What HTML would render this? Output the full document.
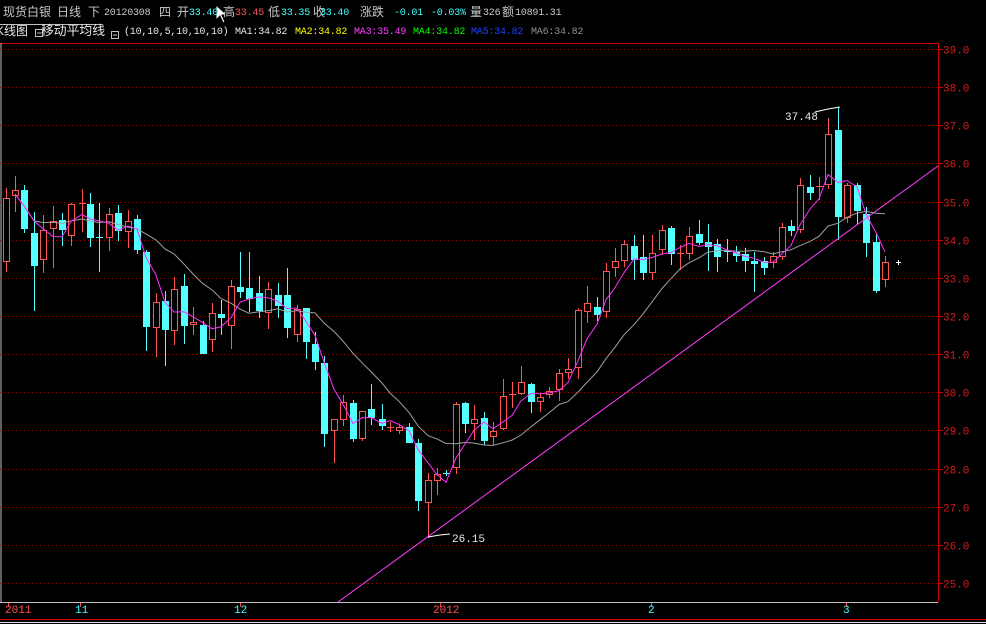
<!DOCTYPE html>
<html><head><meta charset="utf-8"><style>
body{margin:0;background:#000;width:986px;height:624px;overflow:hidden;position:relative;font-family:"Liberation Mono","Noto Sans CJK SC",monospace}
.t{position:absolute;font-size:12px;line-height:14px;white-space:nowrap;color:#c8c8c8;font-family:"Liberation Sans","Noto Sans CJK SC",sans-serif}
.m{font-family:"Liberation Mono",monospace;font-size:10px;letter-spacing:-0.2px;top:7px}
.m2{font-family:"Liberation Mono",monospace;font-size:10px;letter-spacing:-0.2px;top:26px}
.c{color:#40ffff}.r{color:#ff5050}.y{color:#ffff00}.p{color:#ff40ff}.g{color:#00ff00}.b{color:#2040ff}.gr{color:#909090}.w{color:#e8e8e8}
</style></head><body>
<svg id="s" width="986" height="624" style="position:absolute;left:0;top:0" xmlns="http://www.w3.org/2000/svg"></svg>
<div class="t" style="left:3px;top:5px">现货白银</div>
<div class="t" style="left:57px;top:5px">日线</div>
<div class="t" style="left:88px;top:5px">下</div>
<div class="t m" style="left:104px">20120308</div>
<div class="t" style="left:159px;top:5px">四</div>
<div class="t" style="left:177px;top:5px">开</div>
<div class="t m c" style="left:189px">33.40</div>
<div class="t" style="left:223px;top:5px">高</div>
<div class="t m r" style="left:235px">33.45</div>
<div class="t" style="left:268px;top:5px">低</div>
<div class="t m c" style="left:281px">33.35</div>
<div class="t" style="left:313px;top:5px">收</div>
<div class="t m c" style="left:320px">33.40</div>
<div class="t" style="left:360px;top:5px">涨跌</div>
<div class="t m c" style="left:394px">-0.01</div>
<div class="t m c" style="left:431px">-0.03%</div>
<div class="t" style="left:470px;top:5px">量</div>
<div class="t m" style="left:483px">326</div>
<div class="t" style="left:502px;top:5px">额</div>
<div class="t m" style="left:515px">10891.31</div>
<div class="t w" style="left:-4px;top:24px">K线图</div>
<div class="t w" style="left:41px;top:24px;font-size:12.8px">移动平均线</div>
<div class="t m2 w" style="left:124px">(10,10,5,10,10,10)</div>
<div class="t m2 w" style="left:235px">MA1:34.82</div>
<div class="t m2 y" style="left:295px">MA2:34.82</div>
<div class="t m2 p" style="left:354px">MA3:35.49</div>
<div class="t m2 g" style="left:413px">MA4:34.82</div>
<div class="t m2 b" style="left:471px">MA5:34.82</div>
<div class="t m2 gr" style="left:531px">MA6:34.82</div>
<div class="t w" style="left:785px;top:111px;font-family:'Liberation Mono';font-size:11px">37.48</div>
<div class="t w" style="left:452px;top:533px;font-family:'Liberation Mono';font-size:11px">26.15</div>
<div class="t r" style="left:5px;top:604px;font-family:'Liberation Mono';font-size:11px">2011</div>
<div class="t c" style="left:75px;top:604px;font-family:'Liberation Mono';font-size:11px">11</div>
<div class="t c" style="left:234px;top:604px;font-family:'Liberation Mono';font-size:11px">12</div>
<div class="t r" style="left:433px;top:604px;font-family:'Liberation Mono';font-size:11px">2012</div>
<div class="t c" style="left:648px;top:604px;font-family:'Liberation Mono';font-size:11px">2</div>
<div class="t c" style="left:843px;top:604px;font-family:'Liberation Mono';font-size:11px">3</div>
<script>
var s=document.getElementById('s'),h='';
function L(x1,y1,x2,y2,c,e){h+='<line x1="'+x1+'" y1="'+y1+'" x2="'+x2+'" y2="'+y2+'" stroke="'+c+'" '+(e||'')+'/>';}
L(0,43.5,938,43.5,'#d00000');L(938.5,43,938.5,602,'#d00000');L(1,43,1,602,'#c0c0c0');L(0,602.5,938,602.5,'#c0c0c0');
L(0,619.5,986,619.5,'#e00000');L(0,622.5,986,622.5,'#e0e0e0');
L(0,24.5,102,24.5,'#c0c0c0');
for(var k=0;k<=14;k++){var y=Math.round(49+k*38.14)+.5;L(0,y,937,y,'#a00000','stroke-dasharray="1 3"');L(938,y,943,y,'#d00000');
h+='<text x="943" y="'+(y+4)+'" fill="#d02020" font-family="Liberation Mono" font-size="11">'+(39-k).toFixed(1)+'</text>';}
[8,80,240,440,651,846].forEach(function(a){L(a+.5,603,a+.5,607,'#f04050');});
function B(x,y){h+='<rect x="'+x+'.5" y="'+y+'.5" width="7" height="7" fill="none" stroke="#c0c0c0"/>';L(x+2,y+4,x+6,y+4,'#c0c0c0');}
B(35,29);B(111,31);
var d=[[6,'U',198,262,188,272],[15,'U',190,196,176,212],[24,'D',190,229,185,233],[34,'D',233,266,212,311],[43,'U',230,260,215,273],[53,'U',221,229,206,268],[62,'D',220,230,213,246],[71,'U',204,236,203,246],[82,'U',203,204,189,232],[90,'D',204,238,193,247],[99,'D',237,238,203,272],[109,'U',214,238,208,251],[118,'D',213,231,205,241],[128,'U',221,232,210,248],[137,'D',219,250,215,254],[146,'D',252,327,250,351],[156,'U',302,328,293,357],[165,'D',301,330,291,366],[174,'U',289,331,277,345],[184,'D',286,326,274,344],[193,'U',322,325,307,335],[203,'D',325,354,321,354],[212,'U',313,340,303,352],[221,'D',314,318,300,335],[231,'U',286,326,280,349],[240,'D',287,292,252,298],[249,'D',288,299,252,312],[259,'D',293,311,276,318],[268,'U',289,313,282,329],[278,'D',295,306,283,318],[287,'D',295,328,268,338],[297,'U',309,335,305,342],[306,'D',308,342,308,359],[315,'D',344,362,332,370],[324,'D',363,434,356,447],[334,'U',419,431,419,463],[343,'U',402,420,395,426],[353,'D',403,439,400,442],[362,'U',411,439,411,441],[371,'D',409,418,384,425],[382,'D',419,426,404,430],[390,'U',427,428,422,432],[399,'U',427,431,425,434],[409,'D',427,443,423,443],[418,'D',443,501,439,511],[428,'U',480,503,473,538],[437,'U',474,481,468,495],[446,'D',473,474,470,476],[456,'U',404,468,402,474],[465,'D',403,424,402,433],[474,'U',419,424,405,440],[484,'D',418,441,412,445],[493,'U',431,437,422,445],[503,'U',396,429,379,430],[512,'U',394,395,382,408],[521,'U',382,394,366,395],[531,'D',384,402,383,413],[540,'U',397,402,393,412],[549,'U',391,395,387,398],[559,'U',373,390,369,401],[568,'U',369,373,358,379],[578,'U',310,368,308,379],[587,'U',303,312,286,323],[597,'D',307,315,297,321],[606,'U',271,312,263,318],[615,'U',261,268,248,277],[624,'U',244,261,240,267],[634,'D',246,260,235,280],[643,'D',257,273,235,280],[652,'U',253,273,235,280],[662,'U',230,250,225,255],[671,'D',228,254,226,265],[680,'U',253,254,245,270],[689,'U',236,254,227,260],[699,'D',234,243,220,245],[708,'D',242,247,224,271],[717,'D',244,257,239,272],[727,'D',251,252,239,262],[736,'D',252,256,246,262],[745,'D',254,261,248,272],[754,'D',261,264,252,292],[764,'D',261,268,257,275],[773,'U',256,263,252,268],[782,'U',227,257,223,260],[791,'D',226,231,220,236],[800,'U',185,230,178,233],[810,'D',187,193,175,200],[819,'U',186,187,177,200],[828,'U',134,185,118,189],[838,'D',130,217,107,240],[847,'U',185,218,183,223],[857,'D',185,211,183,225],[866,'D',214,243,207,257],[876,'D',242,291,233,293],[885,'U',262,280,256,287]];
var cl=[];
d.forEach(function(c){var x=c[0],col=c[1]=='U'?'#ff5454':'#54ffff';
 L(x+.5,c[4],x+.5,c[5],col);
 var bh=Math.max(1,c[3]-c[2]);
 if(c[1]=='U'){ if(bh<=1)L(x-3,c[2]+.5,x+4,c[2]+.5,col); else h+='<rect x="'+(x-2.5)+'" y="'+(c[2]+.5)+'" width="6" height="'+(bh-1)+'" fill="#000" stroke="'+col+'"/>';}
 else h+='<rect x="'+(x-3)+'" y="'+c[2]+'" width="7" height="'+bh+'" fill="'+col+'"/>';
 cl.push([x,c[1]=='U'?c[2]:c[3]]);});
function ma(n,col,st){var p=[];for(var i=0;i<cl.length;i++){var a=Math.max(0,i-n+1),sm=0;for(var j=a;j<=i;j++)sm+=cl[j][1];p.push(cl[i][0]+','+(sm/(i-a+1)).toFixed(1));}
h+='<polyline points="'+p.slice(st).join(' ')+'" fill="none" stroke="'+col+'" stroke-width="1"/>';}
ma(12,'#a0a0a0',1);ma(4,'#ff30ff',1);
L(338,602,938,166,'#ff40ff');
L(896,262.5,901,262.5,'#fff');L(898.5,260,898.5,265,'#fff');
h+='<polyline points="428,537 440,535 450,534" fill="none" stroke="#fff"/>';
h+='<polyline points="815,112 828,109 840,107" fill="none" stroke="#fff"/>';
h+='<polygon points="216,5 216,20 220,16 223,23 225,22 222,15 227,15" fill="#fff" stroke="#000"/>';
s.innerHTML=h;
</script>
</body></html>
